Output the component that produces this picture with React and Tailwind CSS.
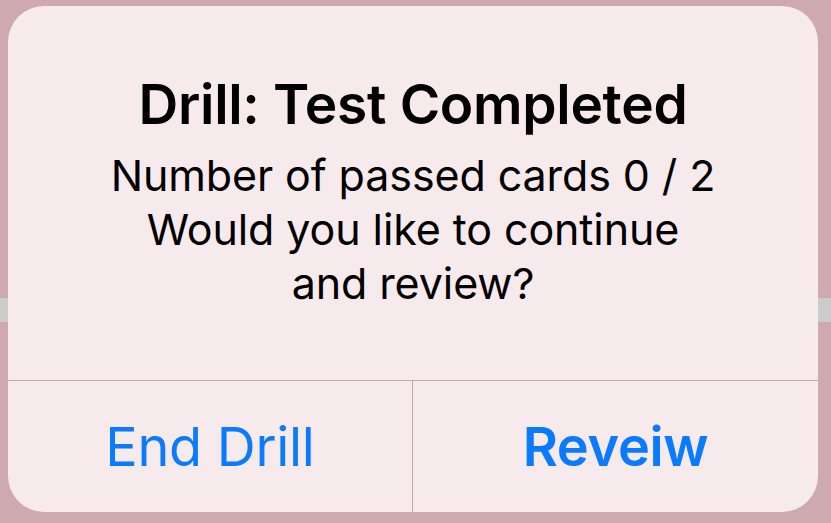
import React from "react";

const App = () => {
  return (
    <div
      className="relative w-[831px] h-[523px] bg-[#cfa9b0] overflow-hidden"
      style={{ fontFamily: "Inter, 'Noto Sans', sans-serif" }}
    >
      <div className="absolute left-0 top-[298px] w-full h-[24px] bg-[#cccccc]" />
      <div className="relative ml-[8px] mt-[6px] w-[810px] h-[506px] rounded-[36px] bg-[#f6eaed] flex flex-col overflow-hidden">
        <div className="h-[374px] flex flex-col items-center pt-[67px]">
          <div className="text-[55px] font-semibold text-black leading-[62px] tracking-[-0.3px]">
            Drill: Test Completed
          </div>
          <div className="mt-[13px] text-[43px] text-black leading-[54px] text-center tracking-[-0.1px]">
            <div>Number of passed cards 0 / 2</div>
            <div>Would you like to continue</div>
            <div>and review?</div>
          </div>
        </div>
        <div className="flex flex-1 border-t border-[#c6a7ad]">
          <div className="w-[405px] flex items-center justify-center text-[54px] text-[#0a7aff] border-r border-[#c6a7ad] tracking-[-0.3px]">
            End Drill
          </div>
          <div className="flex-1 flex items-center justify-center text-[54px] font-semibold text-[#0a7aff] tracking-[-0.3px]">
            Reveiw
          </div>
        </div>
      </div>
    </div>
  );
};

export default App;
